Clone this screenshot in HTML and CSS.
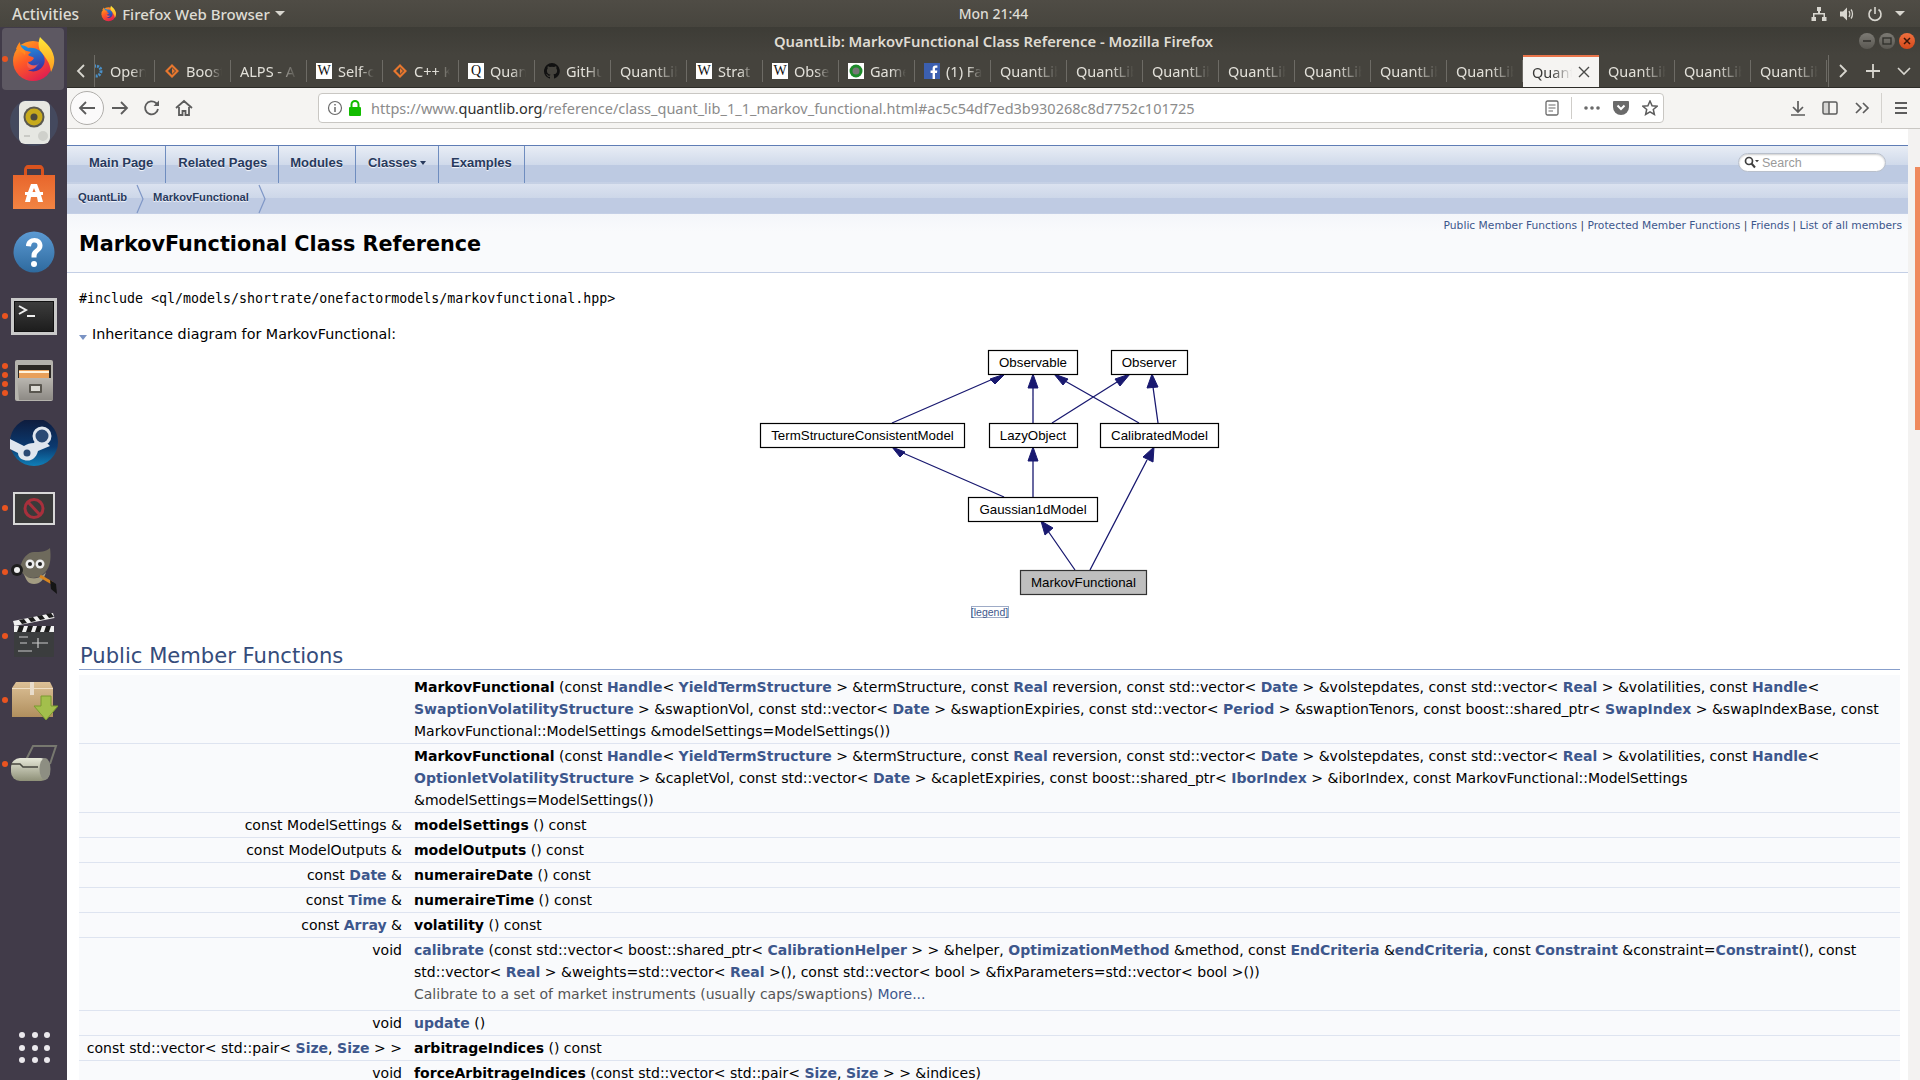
FILE: index.html
```html
<!DOCTYPE html>
<html lang="en">
<head>
  <meta charset="UTF-8" />
  <title>QuantLib: MarkovFunctional Class Reference - Mozilla Firefox</title>
  <link rel="stylesheet" href="styles.css">
</head>
<body>
  <svg class="defs" width="0" height="0">
    <defs>
      <linearGradient id="foxBody" x1="0" y1="0" x2="0.6" y2="1">
        <stop offset="0" stop-color="#ffb31f"/>
        <stop offset="0.5" stop-color="#ff5a26"/>
        <stop offset="1" stop-color="#e0214f"/>
      </linearGradient>
      <linearGradient id="foxWing" x1="0.5" y1="0" x2="0.5" y2="1">
        <stop offset="0" stop-color="#ffe93a"/>
        <stop offset="1" stop-color="#ff9a1f"/>
      </linearGradient>
      <linearGradient id="foxGlobe" x1="0.4" y1="0" x2="0.6" y2="1">
        <stop offset="0" stop-color="#1f8fe0"/>
        <stop offset="1" stop-color="#3a2f9e"/>
      </linearGradient>
      <linearGradient id="steamBg" x1="0.5" y1="0" x2="0.5" y2="1">
        <stop offset="0" stop-color="#0e1a3a"/>
        <stop offset="0.6" stop-color="#0b3a70"/>
        <stop offset="1" stop-color="#0f7fb8"/>
      </linearGradient>
      <linearGradient id="storeBag" x1="0.5" y1="0" x2="0.5" y2="1">
        <stop offset="0" stop-color="#e8662c"/>
        <stop offset="1" stop-color="#f28443"/>
      </linearGradient>
      <linearGradient id="helpBall" x1="0.5" y1="0" x2="0.5" y2="1">
        <stop offset="0" stop-color="#5c9ad3"/>
        <stop offset="1" stop-color="#2e6a9e"/>
      </linearGradient>
      <linearGradient id="cabinet" x1="0.5" y1="0" x2="0.5" y2="1">
        <stop offset="0" stop-color="#b9b6b0"/>
        <stop offset="1" stop-color="#8d8a85"/>
      </linearGradient>
      <linearGradient id="boxTan" x1="0.5" y1="0" x2="0.5" y2="1">
        <stop offset="0" stop-color="#dcc096"/>
        <stop offset="1" stop-color="#b08f5e"/>
      </linearGradient>
      <linearGradient id="rollerMetal" x1="0.5" y1="0" x2="0.5" y2="1">
        <stop offset="0" stop-color="#e6e8d8"/>
        <stop offset="1" stop-color="#8e9078"/>
      </linearGradient>
      <linearGradient id="termScreen" x1="0.5" y1="0" x2="0.5" y2="1">
        <stop offset="0" stop-color="#3c3c3c"/>
        <stop offset="1" stop-color="#1d1d1d"/>
      </linearGradient>
      <symbol id="firefox" viewBox="0 0 48 48">
        <circle cx="24" cy="26" r="20" fill="url(#foxBody)"/>
        <path d="M31 2c3 4 12 9 14 20 1 6-1 11-3 15-1-10-6-15-10-20-3-4-3-10-1-15z" fill="url(#foxWing)"/>
        <path d="M11 10c2 0 7 1 8 3 3-1 9 0 12 3 5 4 6 11 3 15-3 5-10 7-15 4 4 0 8-2 9-5-4 1-8 0-9-3 3 0 5-2 6-4-2-2-4-1-6-3l3-3c-3-1-6-1-8-3-2-1-3-3-3-4z" fill="url(#foxGlobe)"/>
        <path d="M18 27c3 4 9 4 12 1-1 4-6 7-10 5-2-1-2-4-2-6z" fill="#fff" fill-opacity="0.12"/>
        <path d="M7 14c1-3 2-5 4-7 0 3 1 5 3 7 2 1 3 4 2 6-2-3-6-4-9-6z" fill="#ff8a1f"/>
      </symbol>
      <symbol id="speaker" viewBox="0 0 48 48">
        <circle cx="24" cy="22" r="24" fill="#4d6a8d" fill-opacity="0.3"/>
        <rect x="9" y="1" width="31" height="43" rx="6" fill="#e6e7e2"/>
        <circle cx="24" cy="17" r="10.500" fill="#5a584f"/>
        <circle cx="24" cy="17" r="8.500" fill="#c7aa1c"/>
        <circle cx="24" cy="17" r="3.500" fill="#4b4a3e"/>
        <circle cx="33" cy="36" r="5" fill="#cfd0cb"/>
        <path d="M14 36h6" stroke="#c9cac5" stroke-width="2"/>
      </symbol>
      <symbol id="store" viewBox="0 0 48 48">
        <path d="M14 12v-6c0-3 2-5 4-5h12c2 0 4 2 4 5v6h-3v-7h-14v7z" fill="#d9531e"/>
        <path d="M3 11h42v34h-42z" fill="url(#storeBag)"/>
        <path d="M21 20h6l3 8h3v3h-2l2 7h-5l-1-5h-6l-1 5h-5l2-7h-2v-3h3zm1.500 8h3l-1.500-4z" fill="#fff"/>
      </symbol>
      <symbol id="help" viewBox="0 0 48 48">
        <circle cx="24" cy="24" r="20.500" fill="url(#helpBall)"/>
        <path d="M16 18c0-5 4-8 8.500-8s8 3 8 7.500c0 6-6 6-6 11v1h-5v-2c0-6 6-6 6-10 0-2-1-3-3-3-3 0-3 2-3.500 4z" fill="#fff"/>
        <circle cx="24" cy="36" r="3" fill="#fff"/>
      </symbol>
      <symbol id="terminal" viewBox="0 0 48 48">
        <rect x="1" y="6" width="46" height="37" fill="#c9c9c9"/>
        <rect x="4" y="9" width="40" height="31" fill="#111"/>
        <rect x="5" y="10" width="38" height="29" fill="url(#termScreen)"/>
        <path d="M9 14l7 4-7 4" fill="none" stroke="#eee" stroke-width="2"/>
        <rect x="17" y="23" width="8" height="2" fill="#eee"/>
      </symbol>
      <symbol id="files" viewBox="0 0 48 48">
        <rect x="5" y="4" width="38" height="41" rx="2" fill="#b5b3ad"/>
        <rect x="8" y="9" width="33" height="13" fill="#2d2a26"/>
        <rect x="9" y="14" width="30" height="8" fill="#e8a05a"/>
        <rect x="9" y="15" width="30" height="2" fill="#fff3dc"/>
        <path d="M7 22h36v22h-34z" fill="url(#cabinet)"/>
        <rect x="19" y="28" width="13" height="9" rx="1" fill="#59564f"/>
        <rect x="21" y="30" width="9" height="5" fill="#dedcd6"/>
      </symbol>
      <symbol id="steam" viewBox="0 0 48 48">
        <circle cx="24" cy="22" r="24" fill="url(#steamBg)"/>
        <path d="M0 19l14 7c3-2 6-3 10-3l4-9 12 12-12 5c-2 8-8 11-14 9-4-1-6-4-6-7l-8-4z" fill="#dfe6ee"/>
        <circle cx="32" cy="16" r="8" fill="#2a4a74" stroke="#dfe6ee" stroke-width="3"/>
        <circle cx="17" cy="33" r="4.500" fill="#2a4a74" stroke="#dfe6ee" stroke-width="2"/>
      </symbol>
      <symbol id="blocked" viewBox="0 0 48 48">
        <rect x="3" y="8" width="42" height="33" fill="#d8d8d8"/>
        <rect x="5" y="10" width="38" height="29" fill="#3a3a3a"/>
        <circle cx="24" cy="24.500" r="9" fill="none" stroke="#a8303c" stroke-width="3"/>
        <path d="M18 18l12 13" stroke="#a8303c" stroke-width="3"/>
      </symbol>
      <symbol id="gimp" viewBox="0 0 48 48">
        <path d="M10 20c2-10 8-16 14-16s12 0 16-4c1 8 1 16-3 22-4 5-8 8-14 8s-11-3-13-10z" fill="#6e6a5c"/>
        <path d="M14 26c4 6 16 6 22-2-2 8-6 12-12 12s-8-4-10-10z" fill="#a39c82"/>
        <circle cx="7" cy="22" r="6" fill="#1e1e1e"/>
        <circle cx="7" cy="22" r="3" fill="#eee"/>
        <circle cx="20" cy="16" r="4.500" fill="#eee"/>
        <circle cx="20" cy="16" r="2" fill="#222"/>
        <circle cx="30" cy="16" r="4.500" fill="#eee"/>
        <circle cx="30" cy="16" r="2" fill="#222"/>
        <path d="M30 28l12 7" stroke="#d9851f" stroke-width="3"/>
        <path d="M40 32l6 4 1 10-6-5z" fill="#151515"/>
      </symbol>
      <symbol id="clapper" viewBox="0 0 48 48">
        <rect x="4" y="19" width="40" height="26" rx="1" fill="#3b3d3e"/>
        <rect x="4" y="14" width="40" height="6" fill="#f1f1f1"/>
        <path d="M9 14h5l-2 6h-5zm9 0h5l-2 6h-5zm9 0h5l-2 6h-5zm9 0h5l-2 6h-5z" fill="#1c1c1c"/>
        <path d="M3 9l40-8 1.500 5-40 8z" fill="#f1f1f1"/>
        <path d="M9 8l5-1 3 4-5 1zm9-2l5-1 3 4-5 1zm9-2l5-1 3 4-5 1zm9-2l5-1 3 4-5 1z" fill="#1c1c1c"/>
        <path d="M9 25h9M10 31h7M22 31h16M28 26v10M8 39h14" stroke="#c9c9c9" stroke-width="1.200"/>
      </symbol>
      <symbol id="package" viewBox="0 0 48 48">
        <path d="M6 6h34l3 6v29h-41v-29z" fill="url(#boxTan)"/>
        <rect x="2" y="12" width="41" height="1" fill="#f0dfc4"/>
        <rect x="20" y="6" width="4" height="13" fill="#e8dccb"/>
        <path d="M31 20h10v10h7l-12 14-12-14h7z" fill="#a3bf4c" stroke="#7b9a30"/>
      </symbol>
      <symbol id="roller" viewBox="0 0 48 48">
        <path d="M14 24l9-18h23l-6 18" fill="none" stroke="#77786f" stroke-width="2"/>
        <rect x="1" y="18" width="39" height="23" rx="9" fill="url(#rollerMetal)"/>
        <ellipse cx="35" cy="29" rx="5.500" ry="11" fill="#8d8e82"/>
        <path d="M1 24h9l3 3h15" fill="none" stroke="#45463e" stroke-width="1.500"/>
      </symbol>
      <symbol id="diamond" viewBox="0 0 16 16">
        <path d="M8 1l7 7-7 7-7-7zM8 4l-4 4 4 4 4-4z" fill="#e8772e"/>
        <path d="M8 5v6l3-3z" fill="#e8772e"/>
      </symbol>
    </defs>
  </svg>

  <header class="topbar">
    <div class="topbar-left">
      <span class="activities">Activities</span>
      <svg class="app-icon" width="17" height="17"><use href="#firefox"/></svg>
      <span>Firefox Web Browser</span>
      <span class="caret"></span>
    </div>
    <div class="clock">Mon 21:44</div>
    <div class="topbar-right">
      <svg width="16" height="16" viewBox="0 0 16 16" fill="#d8d6cf"><path d="M6 1h4v4h-1v2h5v4h1.500v4h-4.500v-4h1.500v-2.500h-9v2.500h1.500v4h-4.500v-4h1.500v-4h5v-2h-1z"/></svg>
      <svg width="16" height="16" viewBox="0 0 16 16" fill="#d8d6cf"><path d="M1 5.500h3l4-4v13l-4-4h-3z"/><path d="M10 5c1 1.500 1 4.500 0 6M12 3.500c2 2.500 2 6.500 0 9" fill="none" stroke="#d8d6cf" stroke-width="1.300"/></svg>
      <svg width="16" height="16" viewBox="0 0 16 16"><path d="M4.500 3.500a6 6 0 1 0 7 0M8 1v7" fill="none" stroke="#d8d6cf" stroke-width="1.600"/></svg>
      <span class="caret"></span>
    </div>
  </header>

  <div class="desktop">
    <nav class="dock">
      <div class="dock-item active"><i class="dot"></i><svg width="48" height="48"><use href="#firefox"/></svg></div>
      <div class="dock-item"><svg width="48" height="48"><use href="#speaker"/></svg></div>
      <div class="dock-item"><svg width="48" height="48"><use href="#store"/></svg></div>
      <div class="dock-item"><svg width="48" height="48"><use href="#help"/></svg></div>
      <div class="dock-item"><i class="dot"></i><svg width="48" height="48"><use href="#terminal"/></svg></div>
      <div class="dock-item"><div class="dots"><i></i><i></i><i></i><i></i></div><svg width="48" height="48"><use href="#files"/></svg></div>
      <div class="dock-item"><svg width="48" height="48"><use href="#steam"/></svg></div>
      <div class="dock-item"><i class="dot"></i><svg width="48" height="48"><use href="#blocked"/></svg></div>
      <div class="dock-item"><i class="dot"></i><svg width="48" height="48"><use href="#gimp"/></svg></div>
      <div class="dock-item"><i class="dot"></i><svg width="48" height="48"><use href="#clapper"/></svg></div>
      <div class="dock-item"><i class="dot"></i><svg width="48" height="48"><use href="#package"/></svg></div>
      <div class="dock-item"><i class="dot"></i><svg width="48" height="48"><use href="#roller"/></svg></div>
      <div class="dock-grid">
        <i></i><i></i><i></i><i></i><i></i><i></i><i></i><i></i><i></i>
      </div>
    </nav>

    <main class="window">
      <div class="titlebar">
        <span class="window-title">QuantLib: MarkovFunctional Class Reference - Mozilla Firefox</span>
        <div class="window-buttons">
          <span class="win-btn"><svg width="10" height="10" viewBox="0 0 10 10"><path d="M1 5h8" stroke="#2f2e2a" stroke-width="1.500"/></svg></span>
          <span class="win-btn"><svg width="10" height="10" viewBox="0 0 10 10"><rect x="1" y="2" width="8" height="6" fill="none" stroke="#2f2e2a" stroke-width="1.300"/></svg></span>
          <span class="win-btn close"><svg width="10" height="10" viewBox="0 0 10 10"><path d="M2 2l6 6M8 2l-6 6" stroke="#3a1508" stroke-width="1.500"/></svg></span>
        </div>
      </div>

      <div class="tabbar">
        <span class="tab-arrow"><svg width="10" height="16" viewBox="0 0 10 16"><path d="M8 2l-6 6 6 6" fill="none" stroke="#d8d6cf" stroke-width="1.800"/></svg></span>
        <div class="tabs">
          <div class="tab first"><svg class="fav" width="16" height="16" viewBox="0 0 16 16"><circle cx="8" cy="8" r="5" fill="none" stroke="#4a90c8" stroke-width="3" stroke-dasharray="2 1"/></svg><span>Open</span></div>
          <div class="tab"><svg class="fav" width="16" height="16"><use href="#diamond"/></svg><span>Boost</span></div>
          <div class="tab"><span>ALPS - A</span></div>
          <div class="tab"><b class="fav wiki">W</b><span>Self-c</span></div>
          <div class="tab"><svg class="fav" width="16" height="16"><use href="#diamond"/></svg><span>C++ K</span></div>
          <div class="tab"><b class="fav wiki">Q</b><span>Quan</span></div>
          <div class="tab"><svg class="fav" width="16" height="16" viewBox="0 0 16 16"><path d="M8 0a8 8 0 0 0-2.500 15.600c.4.100.5-.2.500-.4v-1.400c-2.200.5-2.700-1-2.700-1-.4-.9-.9-1.200-.9-1.200-.7-.5.100-.5.100-.5.800.1 1.200.8 1.200.8.700 1.200 1.900.9 2.300.7.100-.5.300-.9.500-1.100-1.800-.2-3.600-.9-3.600-4 0-.9.300-1.600.8-2.100-.1-.2-.4-1 .1-2.100 0 0 .7-.2 2.200.8a7.600 7.600 0 0 1 4 0c1.500-1 2.200-.8 2.200-.8.400 1.100.2 1.900.1 2.100.5.600.8 1.300.8 2.100 0 3.100-1.900 3.700-3.700 3.900.3.300.6.800.6 1.500v2.200c0 .2.100.5.600.4A8 8 0 0 0 8 0z" fill="#111"/></svg><span>GitHub</span></div>
          <div class="tab"><span>QuantLib</span></div>
          <div class="tab"><b class="fav wiki">W</b><span>Strat</span></div>
          <div class="tab"><b class="fav wiki">W</b><span>Obse</span></div>
          <div class="tab"><svg class="fav" width="16" height="16" viewBox="0 0 16 16"><rect width="16" height="16" fill="#fff"/><circle cx="8" cy="8" r="6.500" fill="#1d8a2a"/><circle cx="8" cy="8" r="3.500" fill="#777"/></svg><span>Game</span></div>
          <div class="tab"><svg class="fav" width="16" height="16" viewBox="0 0 16 16"><rect width="16" height="16" fill="#3b5fb0"/><path d="M11 16v-6h2l.3-2.500h-2.300v-1.500c0-.7.300-1.200 1.200-1.200h1.200v-2.200c-.3 0-1-.1-1.800-.1-1.900 0-3 1.100-3 3.200v1.800h-2v2.500h2v6z" fill="#fff"/></svg><span>(1) Fa</span></div>
          <div class="tab"><span>QuantLib</span></div>
          <div class="tab"><span>QuantLib</span></div>
          <div class="tab"><span>QuantLib</span></div>
          <div class="tab"><span>QuantLib</span></div>
          <div class="tab"><span>QuantLib</span></div>
          <div class="tab"><span>QuantLib</span></div>
          <div class="tab"><span>QuantLib</span></div>
          <div class="tab current"><span>Quant</span><svg class="tab-close" width="12" height="12" viewBox="0 0 12 12"><path d="M1 1l10 10M11 1l-10 10" stroke="#4a4a48" stroke-width="1.400"/></svg></div>
          <div class="tab"><span>QuantLib</span></div>
          <div class="tab"><span>QuantLib</span></div>
          <div class="tab"><span>QuantLib</span></div>
        </div>
        <div class="tab-tools">
          <svg width="10" height="16" viewBox="0 0 10 16"><path d="M2 2l6 6-6 6" fill="none" stroke="#d8d6cf" stroke-width="1.800"/></svg>
          <svg width="16" height="16" viewBox="0 0 16 16"><path d="M8 1v14M1 8h14" stroke="#d8d6cf" stroke-width="1.800"/></svg>
          <svg width="14" height="16" viewBox="0 0 14 16"><path d="M1 5l6 6 6-6" fill="none" stroke="#d8d6cf" stroke-width="1.600"/></svg>
        </div>
      </div>

      <div class="navbar">
        <span class="back-btn"><svg width="18" height="18" viewBox="0 0 18 18"><path d="M17 9h-15M8 3l-6 6 6 6" fill="none" stroke="#5c5c5c" stroke-width="1.800"/></svg></span>
        <span class="nav-btn"><svg width="18" height="18" viewBox="0 0 18 18"><path d="M1 9h15M10 3l6 6-6 6" fill="none" stroke="#5c5c5c" stroke-width="1.800"/></svg></span>
        <span class="nav-btn"><svg width="18" height="18" viewBox="0 0 18 18"><path d="M15 10a6.500 6.500 0 1 1-2-6l2 2" fill="none" stroke="#5c5c5c" stroke-width="1.800"/><path d="M16 1.500v5.500h-5.500z" fill="#5c5c5c"/></svg></span>
        <span class="nav-btn"><svg width="18" height="18" viewBox="0 0 18 18"><path d="M1 9l8-7 8 7M4 8v8h3.500v-4h3v4h3.500v-8" fill="none" stroke="#5c5c5c" stroke-width="1.800"/></svg></span>
        <div class="urlbar">
          <svg class="url-info" width="16" height="16" viewBox="0 0 16 16"><circle cx="8" cy="8" r="6.500" fill="none" stroke="#6a6a6a" stroke-width="1.200"/><path d="M8 7v5M8 4v1.600" stroke="#6a6a6a" stroke-width="1.500"/></svg>
          <svg class="url-lock" width="14" height="16" viewBox="0 0 14 16"><path d="M3.500 7v-2.500a3.500 3.500 0 0 1 7 0v2.500" fill="none" stroke="#12bc00" stroke-width="2"/><rect x="1" y="7" width="12" height="9" rx="1" fill="#12bc00"/></svg>
          <span class="url-text">https://www.<em>quantlib.org</em>/reference/class_quant_lib_1_1_markov_functional.html#ac5c54df7ed3b930268c8d7752c101725</span>
          <div class="url-tools">
            <svg width="14" height="16" viewBox="0 0 14 16"><rect x="1" y="1" width="12" height="14" rx="1.500" fill="none" stroke="#6a6a6a" stroke-width="1.300"/><path d="M3.500 5h7M3.500 8h7M3.500 11h4.500" stroke="#6a6a6a" stroke-width="1.200"/></svg>
            <i class="url-sep"></i>
            <svg width="16" height="16" viewBox="0 0 16 16" fill="#6a6a6a"><circle cx="2" cy="8" r="1.800"/><circle cx="8" cy="8" r="1.800"/><circle cx="14" cy="8" r="1.800"/></svg>
            <svg width="16" height="16" viewBox="0 0 16 16"><path d="M1 1h14c.5 0 1 .5 1 1v5a8 8 0 0 1-16 0v-5c0-.5.500-1 1-1z" fill="#6a6a6a"/><path d="M4.500 5.500l3.500 3.500 3.500-3.500" fill="none" stroke="#fff" stroke-width="2"/></svg>
            <svg width="16" height="16" viewBox="0 0 16 16"><path d="M8 1l2.100 4.700 5 .5-3.800 3.300 1.100 5-4.400-2.600-4.400 2.600 1.100-5-3.800-3.300 5-.5z" fill="none" stroke="#5c5c5c" stroke-width="1.500"/></svg>
          </div>
        </div>
        <div class="nav-tools">
          <svg width="16" height="16" viewBox="0 0 16 16"><path d="M8 1v10M3 7l5 5 5-5M1 15h14" fill="none" stroke="#5c5c5c" stroke-width="1.700"/></svg>
          <svg width="16" height="16" viewBox="0 0 16 16"><rect x="1" y="2" width="14" height="12" rx="1.500" fill="none" stroke="#5c5c5c" stroke-width="1.500"/><rect x="2" y="3" width="5" height="10" fill="#5c5c5c" fill-opacity="0.2"/><path d="M7 2v12" stroke="#5c5c5c" stroke-width="1.500"/></svg>
          <svg width="16" height="16" viewBox="0 0 16 16"><path d="M2 3l5 5-5 5M9 3l5 5-5 5" fill="none" stroke="#5c5c5c" stroke-width="1.700"/></svg>
          <i class="nav-sep"></i>
          <svg width="16" height="16" viewBox="0 0 16 16"><path d="M2 3h12M2 8h12M2 13h12" stroke="#5c5c5c" stroke-width="1.800"/></svg>
        </div>
      </div>

      <div class="viewport">
        <div class="page">
          <div class="menu-strip">
            <ul class="menu">
              <li>Main Page</li>
              <li>Related Pages</li>
              <li>Modules</li>
              <li>Classes <span class="menu-caret"></span></li>
              <li>Examples</li>
            </ul>
            <div class="searchbox">
              <svg width="15" height="13" viewBox="0 0 15 13"><circle cx="5" cy="5" r="3.500" fill="none" stroke="#3f3f3f" stroke-width="1.700"/><path d="M7.500 7.500l3.500 4" stroke="#3f3f3f" stroke-width="2"/><path d="M11 4h4l-2 2.200z" fill="#3f3f3f"/></svg>
              <span>Search</span>
            </div>
          </div>
          <div class="breadcrumb">
            <span>QuantLib</span>
            <svg width="8" height="30" viewBox="0 0 8 30"><path d="M1 1l6 14-6 14" fill="none" stroke="#7f97c6" stroke-width="1.200"/></svg>
            <span>MarkovFunctional</span>
            <svg width="8" height="30" viewBox="0 0 8 30"><path d="M1 1l6 14-6 14" fill="none" stroke="#7f97c6" stroke-width="1.200"/></svg>
          </div>

          <div class="header">
            <div class="summary"><a>Public Member Functions</a> | <a>Protected Member Functions</a> | <a>Friends</a> | <a>List of all members</a></div>
            <div class="title">MarkovFunctional Class Reference</div>
          </div>

          <div class="contents">
            <code class="include">#include &lt;ql/models/shortrate/onefactormodels/markovfunctional.hpp&gt;</code>
            <div class="diagram-head"><span class="arrow-down"></span>Inheritance diagram for MarkovFunctional:</div>

            <svg class="diagram" width="480" height="280" viewBox="740 345 480 280">
              <path class="edges" d="M892 424L993 380M1033 424V389M1139 424L1065 382M1052 424L1117 383M1158 424L1153 388M1004 498L903 454M1033 498V462M1075 571L1048 532M1090 571L1147 461"/>
              <g class="heads">
                <path d="M1005 375l-15 5 5 5z"/>
                <path d="M1033 375l-5 14h10z"/>
                <path d="M1054 375l14 5-5 6z"/>
                <path d="M1130 375l-15 5 5 7z"/>
                <path d="M1152 375l-5 14 11-1z"/>
                <path d="M892 448l13 5-5 5z"/>
                <path d="M1033 448l-5 14h10z"/>
                <path d="M1041 522l12 7-8 7z"/>
                <path d="M1154 448l-11 10 10 5z"/>
              </g>
              <g class="nodes">
                <rect x="988.500" y="351.500" width="89" height="24"/>
                <rect x="1111.500" y="351.500" width="76" height="24"/>
                <rect x="760.500" y="424.500" width="204" height="24"/>
                <rect x="989.500" y="424.500" width="88" height="24"/>
                <rect x="1100.500" y="424.500" width="118" height="24"/>
                <rect x="968.500" y="498.500" width="129" height="24"/>
                <rect class="self" x="1020.500" y="571.500" width="126" height="24"/>
              </g>
              <g class="labels">
                <text x="1033" y="368">Observable</text>
                <text x="1149" y="368">Observer</text>
                <text x="862.500" y="441">TermStructureConsistentModel</text>
                <text x="1033" y="441">LazyObject</text>
                <text x="1159.500" y="441">CalibratedModel</text>
                <text x="1033" y="515">Gaussian1dModel</text>
                <text x="1083.500" y="588">MarkovFunctional</text>
              </g>
              <text class="legend" x="989.500" y="617">[legend]</text>
              <rect class="legend-box" x="971.500" y="607.500" width="37" height="11"/>
            </svg>

            <h2 class="group-head">Public Member Functions</h2>
            <table class="members">
              <tr>
                <td class="ret"></td>
                <td class="sig"><b>MarkovFunctional</b> (const <a>Handle</a>&lt; <a>YieldTermStructure</a> &gt; &amp;termStructure, const <a>Real</a> reversion, const std::vector&lt; <a>Date</a> &gt; &amp;volstepdates, const std::vector&lt; <a>Real</a> &gt; &amp;volatilities, const <a>Handle</a>&lt;<br><a>SwaptionVolatilityStructure</a> &gt; &amp;swaptionVol, const std::vector&lt; <a>Date</a> &gt; &amp;swaptionExpiries, const std::vector&lt; <a>Period</a> &gt; &amp;swaptionTenors, const boost::shared_ptr&lt; <a>SwapIndex</a> &gt; &amp;swapIndexBase, const<br>MarkovFunctional::ModelSettings &amp;modelSettings=ModelSettings())</td>
              </tr>
              <tr>
                <td class="ret"></td>
                <td class="sig"><b>MarkovFunctional</b> (const <a>Handle</a>&lt; <a>YieldTermStructure</a> &gt; &amp;termStructure, const <a>Real</a> reversion, const std::vector&lt; <a>Date</a> &gt; &amp;volstepdates, const std::vector&lt; <a>Real</a> &gt; &amp;volatilities, const <a>Handle</a>&lt;<br><a>OptionletVolatilityStructure</a> &gt; &amp;capletVol, const std::vector&lt; <a>Date</a> &gt; &amp;capletExpiries, const boost::shared_ptr&lt; <a>IborIndex</a> &gt; &amp;iborIndex, const MarkovFunctional::ModelSettings<br>&amp;modelSettings=ModelSettings())</td>
              </tr>
              <tr><td class="ret">const ModelSettings &amp;</td><td class="sig"><b>modelSettings</b> () const</td></tr>
              <tr><td class="ret">const ModelOutputs &amp;</td><td class="sig"><b>modelOutputs</b> () const</td></tr>
              <tr><td class="ret">const <a>Date</a> &amp;</td><td class="sig"><b>numeraireDate</b> () const</td></tr>
              <tr><td class="ret">const <a>Time</a> &amp;</td><td class="sig"><b>numeraireTime</b> () const</td></tr>
              <tr><td class="ret">const <a>Array</a> &amp;</td><td class="sig"><b>volatility</b> () const</td></tr>
              <tr class="has-desc">
                <td class="ret">void</td>
                <td class="sig"><a>calibrate</a> (const std::vector&lt; boost::shared_ptr&lt; <a>CalibrationHelper</a> &gt; &gt; &amp;helper, <a>OptimizationMethod</a> &amp;method, const <a>EndCriteria</a> &amp;<a>endCriteria</a>, const <a>Constraint</a> &amp;constraint=<a>Constraint</a>(), const<br>std::vector&lt; <a>Real</a> &gt; &amp;weights=std::vector&lt; <a>Real</a> &gt;(), const std::vector&lt; bool &gt; &amp;fixParameters=std::vector&lt; bool &gt;())<br><span class="desc">Calibrate to a set of market instruments (usually caps/swaptions) <a>More...</a></span></td>
              </tr>
              <tr><td class="ret">void</td><td class="sig"><a>update</a> ()</td></tr>
              <tr><td class="ret">const std::vector&lt; std::pair&lt; <a>Size</a>, <a>Size</a> &gt; &gt;</td><td class="sig"><b>arbitrageIndices</b> () const</td></tr>
              <tr><td class="ret">void</td><td class="sig"><b>forceArbitrageIndices</b> (const std::vector&lt; std::pair&lt; <a>Size</a>, <a>Size</a> &gt; &gt; &amp;indices)</td></tr>
            </table>
          </div>
        </div>
        <div class="scrollbar"><div class="thumb"></div></div>
      </div>
    </main>
  </div>
</body>
</html>
```
FILE: styles.css
```css
* {
  box-sizing: border-box;
}

html, body {
  margin: 0;
  height: 100%;
  overflow: hidden;
}

body {
  width: 1920px;
  height: 1080px;
  display: flex;
  flex-direction: column;
  font-family: "DejaVu Sans", sans-serif;
  background: #fff;
}

.defs {
  position: absolute;
}

/* gnome top bar */
.topbar {
  height: 27px;
  flex: none;
  display: grid;
  grid-template-columns: 1fr auto 1fr;
  align-items: center;
  padding-left: 67px;
  position: relative;
  background: linear-gradient(#4f4c45, #47453e);
  color: #dedcd4;
  font-family: "Noto Sans", sans-serif;
  font-size: 14px;
  font-weight: 500;
}

.topbar-left {
  position: absolute;
  left: 12px;
  top: 0;
  height: 27px;
  display: flex;
  align-items: center;
  gap: 5px;
  font-size: 15px;
  white-space: nowrap;
}

.activities {
  margin-right: 16px;
  font-size: 15.600px;
}

.clock {
  grid-column: 2;
}

.topbar-right {
  grid-column: 3;
  justify-self: end;
  display: flex;
  align-items: center;
  gap: 12px;
  padding-right: 15px;
}

.caret {
  display: inline-block;
  width: 0;
  height: 0;
  border-left: 5px solid transparent;
  border-right: 5px solid transparent;
  border-top: 5px solid #d8d6cf;
}

.desktop {
  flex: 1;
  display: flex;
  min-height: 0;
}

/* launcher */
.dock {
  width: 67px;
  flex: none;
  display: flex;
  flex-direction: column;
  padding-top: 1px;
  position: relative;
  background: #413b49;
}

.dock-item {
  height: 64px;
  flex: none;
  display: flex;
  align-items: center;
  justify-content: center;
  position: relative;
}

.dock-item.active {
  margin: 0 3px 2px 2px;
  height: 62px;
  border-radius: 4px;
  background: #5d5862;
}

.dot {
  position: absolute;
  left: 2px;
  top: 29px;
  width: 6px;
  height: 6px;
  border-radius: 50%;
  background: #e95420;
}

.dock-item.active .dot {
  left: 0;
  top: 28px;
}

.dots {
  position: absolute;
  left: 2px;
  top: 15px;
  display: flex;
  flex-direction: column;
  gap: 3px;
}

.dots i {
  width: 6px;
  height: 6px;
  border-radius: 50%;
  background: #e95420;
}

.dock-grid {
  position: absolute;
  left: 19px;
  bottom: 17px;
  display: grid;
  grid-template-columns: repeat(3, 6px);
  gap: 6.500px;
}

.dock-grid i {
  width: 6px;
  height: 6px;
  border-radius: 50%;
  background: #ebe9ed;
}

/* browser */
.window {
  flex: 1;
  min-width: 0;
  display: flex;
  flex-direction: column;
}

.titlebar {
  height: 28px;
  flex: none;
  position: relative;
  display: flex;
  align-items: center;
  justify-content: center;
  background: linear-gradient(#3d3c36, #45433d);
  color: #dfdbd2;
  font-family: "Noto Sans", sans-serif;
  font-size: 14.800px;
  font-weight: 600;
}

.window-buttons {
  position: absolute;
  right: 5px;
  top: 6px;
  display: flex;
  gap: 4px;
}

.win-btn {
  width: 16px;
  height: 16px;
  border-radius: 50%;
  display: flex;
  align-items: center;
  justify-content: center;
  background: linear-gradient(#7c7a74, #5a5852);
}

.win-btn.close {
  background: linear-gradient(#f0703f, #d4481a);
}

.tabbar {
  height: 33px;
  flex: none;
  display: flex;
  background: #45433d;
  border-bottom: 1px solid #2d2c28;
}

.tab-arrow {
  width: 28px;
  flex: none;
  display: flex;
  align-items: center;
  justify-content: center;
  border-right: 1px solid #6d6b65;
}

.tabs {
  width: 1733px;
  flex: none;
  display: flex;
  overflow: hidden;
}

.tab {
  width: 76px;
  flex: none;
  display: flex;
  align-items: center;
  gap: 6px;
  padding: 0 9px;
  position: relative;
  color: #e2e0d9;
  font-family: "Noto Sans", sans-serif;
  font-size: 14.500px;
  white-space: nowrap;
}

.tab::after {
  content: "";
  position: absolute;
  right: 0;
  top: 5px;
  bottom: 5px;
  width: 1px;
  background: #6d6b65;
}

.tab.first {
  margin-left: -16px;
}

.tab span {
  flex: 1;
  min-width: 0;
  overflow: hidden;
  -webkit-mask-image: linear-gradient(to right, #000 60%, transparent);
  mask-image: linear-gradient(to right, #000 60%, transparent);
}

.tab.current {
  background: #f5f4f2;
  color: #3a3a38;
  border-top: 2px solid #e9744a;
}

.tab.current span {
  -webkit-mask-image: linear-gradient(to right, #000 50%, transparent);
  mask-image: linear-gradient(to right, #000 50%, transparent);
}

.tab.current::after {
  display: none;
}

.fav {
  flex: none;
  width: 16px;
  height: 16px;
}

.wiki {
  display: flex;
  align-items: center;
  justify-content: center;
  background: #fff;
  color: #111;
  font-family: "Liberation Serif", serif;
  font-size: 14px;
  font-weight: 400;
}

.tab-tools {
  flex: 1;
  display: flex;
  align-items: center;
  justify-content: space-between;
  padding: 0 9px;
  border-left: 1px solid #6d6b65;
}

.navbar {
  height: 41px;
  flex: none;
  display: flex;
  align-items: center;
  padding-left: 3px;
  background: #f5f4f2;
  border-bottom: 1px solid #c9c7c3;
}

.back-btn {
  width: 34px;
  height: 34px;
  flex: none;
  display: flex;
  align-items: center;
  justify-content: center;
  border: 1px solid #b0aeab;
  border-radius: 50%;
  background: #fbfafa;
}

.nav-btn {
  width: 32px;
  flex: none;
  display: flex;
  justify-content: center;
}

.urlbar {
  width: 1346px;
  height: 30px;
  flex: none;
  margin-left: 118px;
  display: flex;
  align-items: center;
  padding: 0 5px 0 8px;
  background: #fff;
  border: 1px solid #c9c7c3;
  border-radius: 4px;
}

.url-lock {
  margin-left: 5px;
}

.url-text {
  margin-left: 9px;
  color: #8b8b8b;
  font-family: "Noto Sans", sans-serif;
  font-size: 14.500px;
  white-space: nowrap;
}

.url-text em {
  font-style: normal;
  color: #2f2f2f;
}

.url-tools {
  margin-left: auto;
  display: flex;
  align-items: center;
  gap: 13px;
}

.url-sep {
  width: 1px;
  height: 22px;
  background: #cfcdc9;
  margin: 0 -1px;
}

.nav-tools {
  flex: 1;
  display: flex;
  align-items: center;
  justify-content: flex-end;
  gap: 16px;
  padding-right: 11px;
}

.nav-sep {
  width: 1px;
  height: 30px;
  margin: 0 -5px;
  background: #d4d2ce;
}

/* doxygen page */
.viewport {
  flex: 1;
  min-height: 0;
  display: flex;
  overflow: hidden;
}

.page {
  flex: 1;
  min-width: 0;
  padding-top: 16px;
  background: #fff;
}

.scrollbar {
  width: 12px;
  flex: none;
  padding: 38px 0 0 7px;
  background: #f3f2f1;
}

.thumb {
  width: 5px;
  height: 263px;
  background: #ef8a5e;
}

.menu-strip {
  height: 38px;
  display: flex;
  align-items: stretch;
  justify-content: space-between;
  border-top: 1px solid #5f7db5;
  background: linear-gradient(#e8edf5, #cfd9ea 52%, #bdcae2 52%, #bdcae2 97%, #cdd6e8);
}

.menu {
  list-style: none;
  margin: 0;
  padding: 0 0 0 5px;
  display: flex;
}

.menu li {
  display: flex;
  align-items: center;
  gap: 3px;
  padding: 0 12px 5px 12px;
  border-right: 1px solid #6f8dbf;
  color: #283a5d;
  font-family: "Liberation Sans", sans-serif;
  font-size: 13px;
  font-weight: 700;
  text-shadow: 0 1px 1px rgba(255, 255, 255, 0.9);
}

.menu li:first-child {
  padding-left: 17px;
}

.menu li:nth-child(2) {
  padding-right: 11px;
}

.menu li:nth-child(3) {
  padding-left: 11px;
}

.menu-caret {
  display: inline-block;
  width: 0;
  height: 0;
  border-left: 3.500px solid transparent;
  border-right: 3.500px solid transparent;
  border-top: 4px solid #283a5d;
  margin-top: 2px;
}

.searchbox {
  width: 148px;
  height: 19px;
  margin: 7px 22px 0 0;
  display: flex;
  align-items: center;
  gap: 3px;
  padding-left: 5px;
  background: #fff;
  border: 1px solid #b9c0cc;
  border-radius: 10px;
  box-shadow: inset 0 1px 2px rgba(0, 0, 0, 0.2);
  color: #9a9a9a;
  font-family: "Liberation Sans", sans-serif;
  font-size: 12.500px;
}

.breadcrumb {
  height: 31px;
  display: flex;
  align-items: center;
  padding: 0 0 3px 11px;
  border-top: 1px solid #c5d0e4;
  border-bottom: 1px solid #c4cfe6;
  background: linear-gradient(#dbe2f0, #cdd7e9 48%, #bfcbe3 48%, #bfcbe3);
  color: #283a5d;
  font-family: "Liberation Sans", sans-serif;
  font-size: 11.200px;
  font-weight: 700;
  text-shadow: 0 1px 1px rgba(255, 255, 255, 0.9);
}

.breadcrumb svg {
  margin: 3px 9px 0;
}

.header {
  height: 59px;
  position: relative;
  background: linear-gradient(#f4f6fa, #f9fafc 30%);
  border-bottom: 1px solid #c4cfe5;
}

.summary {
  position: absolute;
  right: 6px;
  top: 5px;
  color: #3a4560;
  font-size: 10.700px;
  white-space: nowrap;
}

.summary a {
  color: #3d578c;
}

.title {
  padding: 18px 0 0 12px;
  color: #000;
  font-size: 20.750px;
  font-weight: 700;
}

.contents {
  padding: 17px 8px 0 12px;
  color: #000;
}

.include {
  display: block;
  font-family: "DejaVu Sans Mono", monospace;
  font-size: 13.300px;
  line-height: 17px;
}

.diagram-head {
  margin-top: 19px;
  display: flex;
  align-items: center;
  font-size: 14.300px;
  line-height: 17px;
}

.arrow-down {
  width: 0;
  height: 0;
  margin: 5px 5px 0 0;
  border-left: 4.500px solid transparent;
  border-right: 4.500px solid transparent;
  border-top: 5px solid #7a93c4;
}

.diagram {
  display: block;
  margin: 1px 0 0 661px;
}

.diagram .edges {
  fill: none;
  stroke: #191970;
  stroke-width: 1.300;
}

.diagram .heads path {
  fill: #191970;
  stroke: #191970;
}

.diagram .nodes rect {
  fill: #fff;
  stroke: #000;
  stroke-width: 1.200;
}

.diagram .nodes rect.self {
  fill: #bfbfbf;
  stroke: #333;
}

.diagram .labels text {
  font-family: "Liberation Sans", sans-serif;
  font-size: 13.300px;
  fill: #000;
  text-anchor: middle;
}

.diagram .legend {
  font-family: "Liberation Sans", sans-serif;
  font-size: 10.500px;
  fill: #3d578c;
  text-anchor: middle;
}

.diagram .legend-box {
  fill: none;
  stroke: #3d578c;
  stroke-dasharray: 1 1;
}

.group-head {
  margin: 18px 0 0;
  height: 28px;
  padding: 0 1px;
  border-bottom: 1px solid #879ecb;
  color: #354c7b;
  font-size: 21.100px;
  font-weight: 400;
  line-height: 27px;
}

.members {
  width: 100%;
  margin-top: 5px;
  border-collapse: collapse;
  background: #f9fafc;
  font-size: 14.030px;
  line-height: 22px;
}

.members td {
  padding: 1px 0;
  border-bottom: 1px solid #dee4f0;
  vertical-align: top;
  white-space: nowrap;
}

.members .ret {
  width: 335px;
  padding-right: 12px;
  text-align: right;
}

.members .has-desc .sig {
  padding-bottom: 5px;
}

.members a {
  color: #3d578c;
  font-weight: 700;
}

.members b {
  font-weight: 700;
}

.desc {
  color: #555;
}

.desc a {
  font-weight: 400;
}
```
